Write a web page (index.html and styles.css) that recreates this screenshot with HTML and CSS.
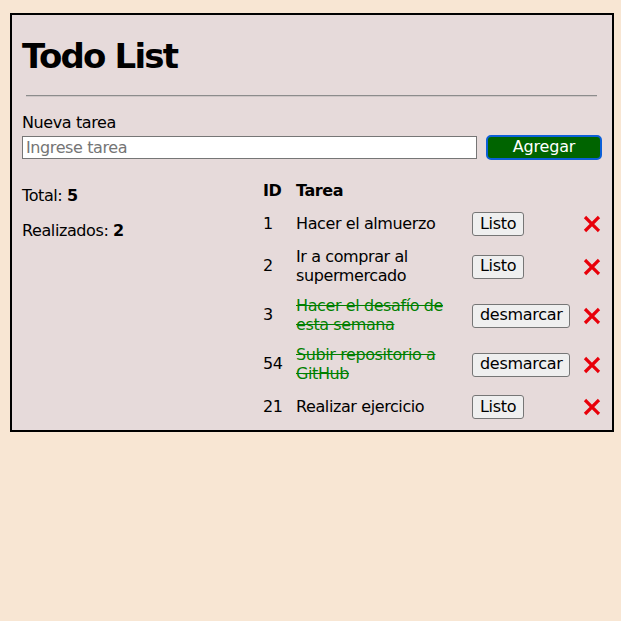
FILE: index.html
```html
<!DOCTYPE html>
<html lang="es">
<head>
<meta charset="utf-8">
<title>Todo List</title>
<link rel="stylesheet" href="styles.css">
</head>
<body>
<div class="page">
  <div class="card">
    <h1 class="title">Todo List</h1>
    <hr class="divider">
    <label class="label" for="nueva">Nueva tarea</label>
    <div class="form-row">
      <input id="nueva" class="input" type="text" placeholder="Ingrese tarea">
      <button class="btn-add" type="button">Agregar</button>
    </div>
    <div class="content">
      <div class="stats">
        <p class="stat">Total: <b>5</b></p>
        <p class="stat">Realizados: <b>2</b></p>
      </div>
      <table class="tasks">
        <colgroup>
          <col class="c-id">
          <col class="c-task">
          <col class="c-act">
          <col class="c-del">
        </colgroup>
        <thead>
          <tr><th>ID</th><th>Tarea</th><th></th><th></th></tr>
        </thead>
        <tbody>
          <tr>
            <td>1</td><td>Hacer el almuerzo</td>
            <td><button class="btn" type="button">Listo</button></td>
            <td><svg class="del" viewBox="0 0 20 20"><path d="M3.5 3.5 L16.5 16.5 M16.5 3.5 L3.5 16.5"/></svg></td>
          </tr>
          <tr>
            <td>2</td><td>Ir a comprar al supermercado</td>
            <td><button class="btn" type="button">Listo</button></td>
            <td><svg class="del" viewBox="0 0 20 20"><path d="M3.5 3.5 L16.5 16.5 M16.5 3.5 L3.5 16.5"/></svg></td>
          </tr>
          <tr>
            <td>3</td><td><span class="done">Hacer el desafío de esta semana</span></td>
            <td><button class="btn" type="button">desmarcar</button></td>
            <td><svg class="del" viewBox="0 0 20 20"><path d="M3.5 3.5 L16.5 16.5 M16.5 3.5 L3.5 16.5"/></svg></td>
          </tr>
          <tr>
            <td>54</td><td><span class="done">Subir repositorio a GitHub</span></td>
            <td><button class="btn" type="button">desmarcar</button></td>
            <td><svg class="del" viewBox="0 0 20 20"><path d="M3.5 3.5 L16.5 16.5 M16.5 3.5 L3.5 16.5"/></svg></td>
          </tr>
          <tr>
            <td>21</td><td>Realizar ejercicio</td>
            <td><button class="btn" type="button">Listo</button></td>
            <td><svg class="del" viewBox="0 0 20 20"><path d="M3.5 3.5 L16.5 16.5 M16.5 3.5 L3.5 16.5"/></svg></td>
          </tr>
        </tbody>
      </table>
    </div>
  </div>
</div>
</body>
</html>
```

FILE: styles.css
```css
html, body {
  margin: 0;
  padding: 0;
  background: #f8e6d3;
}

body {
  font-family: "DejaVu Sans", "Liberation Sans", sans-serif;
  font-size: 16px;
  letter-spacing: -0.4px;
  line-height: 18.5px;
  color: #000;
}

.page {
  padding: 13px 0 0 10px;
}

.card {
  box-sizing: border-box;
  width: 604px;
  border: 2px solid #000;
  background: #e6dada;
  padding: 10px 10px 5px 10px;
}

.title {
  margin: 11px 0 0 0;
  font-size: 34px;
  line-height: 40px;
  font-weight: bold;
  letter-spacing: -1.8px;
}

.divider {
  margin: 19px 5px 0 4px;
  height: 0;
  border: 0;
  border-top: 1px solid #8c8c8c;
  border-bottom: 1px solid #cfc6c6;
}

.label {
  display: block;
  margin-top: 17px;
}

.form-row {
  display: flex;
  align-items: center;
  gap: 9px;
  margin-top: 2px;
  height: 25px;
}

.input {
  flex: 1;
  box-sizing: border-box;
  height: 23px;
  margin: 0;
  padding: 0 3px;
  border: 1px solid #767676;
  background: #fff;
  font: inherit;
  letter-spacing: -0.4px;
  color: #000;
}

.input::placeholder {
  color: #757575;
}

.btn-add {
  box-sizing: border-box;
  width: 116px;
  height: 25px;
  margin: 0;
  padding: 0;
  background: #006400;
  border: 2px solid #0b5fd8;
  border-radius: 5px;
  color: #fff;
  font: inherit;
  letter-spacing: -0.2px;
}

.content {
  display: flex;
  margin-top: 16px;
}

.stats {
  width: 236px;
  padding-top: 12px;
}

.stat {
  margin: 0 0 19px 0;
  line-height: 16px;
}

.tasks {
  width: 344px;
  table-layout: fixed;
  border-collapse: collapse;
}

.c-id { width: 33px; }
.c-task { width: 176px; }
.c-act { width: 109px; }
.c-del { width: 26px; }

.tasks th,
.tasks td {
  padding: 6px 5px;
  text-align: left;
  vertical-align: middle;
}

.tasks th {
  font-weight: bold;
}

.tasks td:last-child {
  padding: 6px 0 6px 7px;
}

.done {
  color: #008000;
  text-decoration: line-through;
}

.btn {
  box-sizing: border-box;
  height: 24px;
  margin: 0;
  padding: 0 7px;
  background: #efefef;
  border: 1px solid #767676;
  border-radius: 3px;
  color: #000;
  font: inherit;
  letter-spacing: -0.3px;
  display: block;
}

.del {
  display: block;
  width: 18px;
  height: 18px;
}

.del path {
  fill: none;
  stroke: #e8000a;
  stroke-width: 3.6;
  stroke-linecap: square;
}
```
